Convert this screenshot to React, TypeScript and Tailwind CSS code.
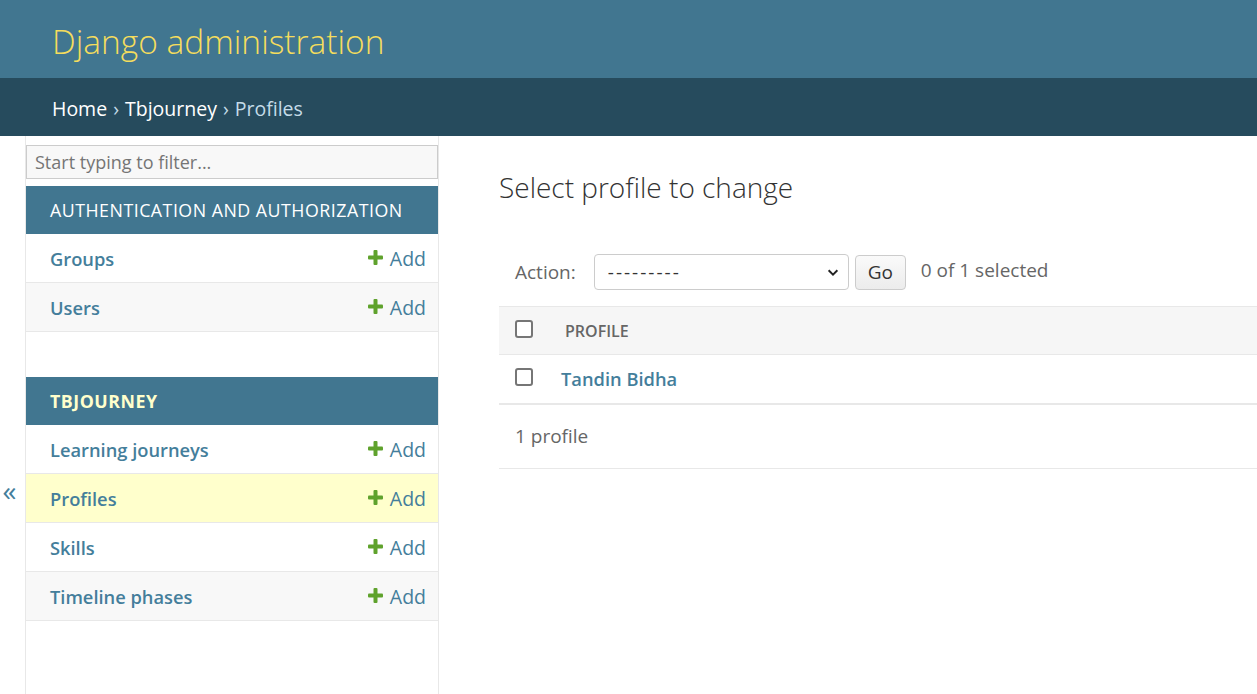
import React from 'react'

const font = { fontFamily: '"Open Sans", "Noto Sans", sans-serif' }

function PlusIcon() {
  return (
    <svg width="15" height="15" viewBox="0 0 15 15" className="-mt-[4px] shrink-0">
      <rect x="5.5" y="0" width="4" height="15" rx="1" fill="#5fa22c" />
      <rect x="0" y="5.5" width="15" height="4" rx="1" fill="#5fa22c" />
    </svg>
  )
}

type Model = { name: string; current?: boolean }

function ModelRow({ model, odd }: { model: Model; odd: boolean }) {
  const bg = model.current ? 'bg-[#ffffcc]' : odd ? 'bg-white' : 'bg-[#f8f8f8]'
  return (
    <div className={`flex h-[49px] items-center justify-between border-b border-[#e8e8e8] pl-6 pr-3 ${bg}`}>
      <a className="pt-[2px] text-[18.3px] font-semibold text-[#447e9b]">{model.name}</a>
      <a className="flex items-center gap-[7px] pt-[2px] text-[19.5px] text-[#447e9b]">
        <PlusIcon />
        Add
      </a>
    </div>
  )
}

function AppModule({ title, current, models }: { title: string; current?: boolean; models: Model[] }) {
  return (
    <div className="mb-[45px]">
      <div
        className={`flex h-12 items-center bg-[#417690] pl-6 text-[17.8px] uppercase tracking-[0.5px] ${
          current ? 'font-bold text-[#ffffcc]' : 'text-white'
        }`}
      >
        {title}
      </div>
      {models.map((m, i) => (
        <ModelRow key={m.name} model={m} odd={i % 2 === 0} />
      ))}
    </div>
  )
}

export default function App() {
  return (
    <div className="min-h-screen w-full overflow-hidden bg-white text-[#333]" style={font}>
      {/* Header */}
      <header className="flex h-[78px] items-center bg-[#417690] pl-[52px] pt-1">
        <h1 className="text-[33.5px] font-light text-[#f5dd5d]">Django administration</h1>
      </header>

      {/* Breadcrumbs */}
      <div className="flex h-[58px] items-center bg-[#264b5d] pl-[52px] pt-1 text-[19.5px] text-white">
        <a>Home</a>
        <span className="mx-[6px] text-[#c4dce8]">›</span>
        <a>Tbjourney</a>
        <span className="mx-[6px] text-[#c4dce8]">›</span>
        <span className="text-[#c4dce8]">Profiles</span>
      </div>

      <div className="flex min-h-[558px]">
        {/* Sidebar toggle */}
        <button className="flex w-[26px] shrink-0 items-start justify-center border-r border-[#e8e8e8] pr-[6px] pt-[340px] text-[28px] leading-none text-[#447e9b]">
          «
        </button>

        {/* Sidebar */}
        <nav className="w-[413px] shrink-0 border-r border-[#e8e8e8] pt-[9px]">
          <input
            className="mb-[7px] h-[34px] w-full border border-[#cccccc] bg-[#f8f8f8] px-2 text-[18px] text-[#333] placeholder:text-[#757575] outline-none"
            placeholder="Start typing to filter..."
          />
          <AppModule
            title="Authentication and Authorization"
            models={[{ name: 'Groups' }, { name: 'Users' }]}
          />
          <AppModule
            title="Tbjourney"
            current
            models={[
              { name: 'Learning journeys' },
              { name: 'Profiles', current: true },
              { name: 'Skills' },
              { name: 'Timeline phases' },
            ]}
          />
        </nav>

        {/* Content */}
        <main className="flex-1 pl-[60px] pt-[30px]">
          <h2 className="mb-[46px] text-[28px] font-light text-[#333]">Select profile to change</h2>

          <div className="flex items-center pb-[16px] pl-4 text-[19px] text-[#666]">
            <label className="mr-[18px]">Action:</label>
            <div className="relative mr-[6px] flex h-[36px] w-[255px] items-center rounded-[4px] border border-[#cccccc] px-[13px] text-[#333]">
              <span className="tracking-[2px]">---------</span>
              <svg className="absolute right-[8px]" width="14" height="14" viewBox="0 0 16 16">
                <path d="M3 6l5 5 5-5" fill="none" stroke="#222" strokeWidth="2.2" />
              </svg>
            </div>
            <button className="mr-[15px] h-[35px] w-[51px] rounded-[4px] border border-[#cccccc] bg-gradient-to-b from-[#fafafa] to-[#ececec] text-[19px] text-[#333]">
              Go
            </button>
            <span className="-mt-1">0 of 1 selected</span>
          </div>

          <div className="w-full">
            <div className="flex h-[49px] items-center border-y border-[#e8e8e8] bg-[#f6f6f6] pl-4">
              <span className="-mt-1 h-[18px] w-[18px] rounded-[3px] border-2 border-[#767676] bg-white" />
              <span className="ml-8 text-[16px] font-semibold uppercase text-[#666]">Profile</span>
            </div>
            <div className="flex h-[50px] items-center border-b-2 border-[#e8e8e8] pl-4">
              <span className="-mt-1 h-[18px] w-[18px] rounded-[3px] border-2 border-[#767676] bg-white" />
              <a className="ml-[28px] text-[18.3px] font-semibold text-[#447e9b]">Tandin Bidha</a>
            </div>
            <div className="flex h-[64px] items-center border-b border-[#e8e8e8] pl-4 text-[19px] text-[#666]">
              1 profile
            </div>
          </div>
        </main>
      </div>
    </div>
  )
}
